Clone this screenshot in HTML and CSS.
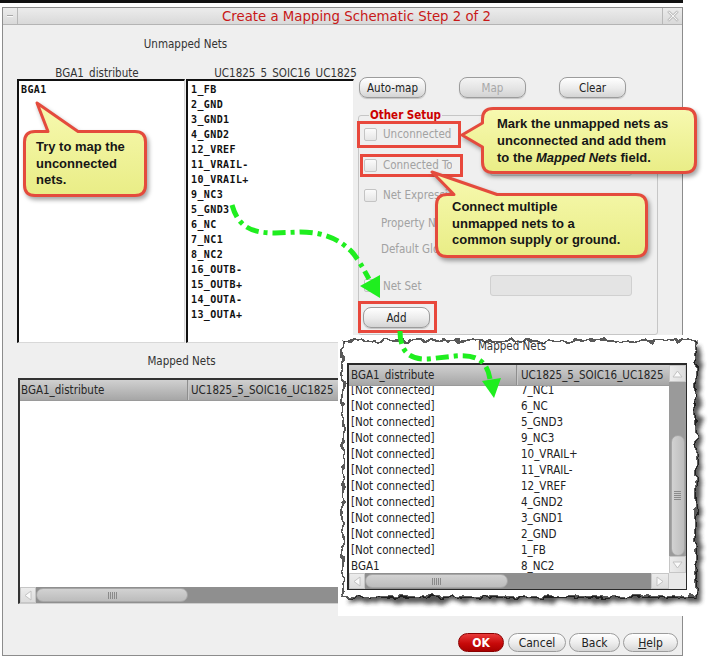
FILE: index.html
```html
<!DOCTYPE html>
<html>
<head>
<meta charset="utf-8">
<title>Create a Mapping Schematic Step 2 of 2</title>
<link rel="stylesheet" href="styles.css">
</head>
<body>
<div class="topstrip"></div>
<div class="window">
  <div class="titlebar">
    <div class="tb-btn tb-min"><span class="minbar"></span></div>
    <div class="title">Create a Mapping Schematic Step 2 of 2</div>
    <div class="tb-btn tb-close">
      <svg width="12" height="12" viewBox="0 0 12 12"><path d="M2,2 L10,10 M10,2 L2,10" stroke="#c4c4c4" stroke-width="3" stroke-linecap="round"/><path d="M2,2 L10,10 M10,2 L2,10" stroke="#f4f4f4" stroke-width="1" stroke-linecap="round"/></svg>
    </div>
  </div>
  <div class="content">
    <div class="top">
      <div class="unmapped">
        <div class="sec-label">Unmapped Nets</div>
        <div class="lists">
          <div class="listcol">
            <div class="colhead colhead-l">BGA1_distribute</div>
            <div class="listbox listbox-l">
              <div class="item">BGA1</div>
            </div>
          </div>
          <div class="listcol">
            <div class="colhead colhead-r">UC1825_5_SOIC16_UC1825</div>
            <div class="listbox listbox-r">
              <div class="item">1_FB</div>
              <div class="item">2_GND</div>
              <div class="item">3_GND1</div>
              <div class="item">4_GND2</div>
              <div class="item">12_VREF</div>
              <div class="item">11_VRAIL-</div>
              <div class="item">10_VRAIL+</div>
              <div class="item">9_NC3</div>
              <div class="item">5_GND3</div>
              <div class="item">6_NC</div>
              <div class="item">7_NC1</div>
              <div class="item">8_NC2</div>
              <div class="item">16_OUTB-</div>
              <div class="item">15_OUTB+</div>
              <div class="item">14_OUTA-</div>
              <div class="item">13_OUTA+</div>
            </div>
          </div>
        </div>
      </div>
      <div class="rightpanel">
        <div class="btnrow">
          <div class="btn">Auto-map</div>
          <div class="btn btn-disabled">Map</div>
          <div class="btn">Clear</div>
        </div>
        <fieldset class="group">
          <legend class="legend">Other Setup</legend>
          <div class="crow r1"><span class="cb"></span><span class="lbl">Unconnected</span></div>
          <div class="crow r2"><span class="cb"></span><span class="lbl lbl-ct">Connected To</span><span class="field field-ct"></span></div>
          <div class="crow r3"><span class="cb"></span><span class="lbl">Net Expression</span></div>
          <div class="crow r4"><span class="lbl lbl-plain">Property Name</span></div>
          <div class="crow r5"><span class="lbl lbl-plain">Default Global</span></div>
          <div class="crow r6"><span class="cb"></span><span class="lbl lbl-ns">Net Set</span><span class="field"></span></div>
          <div class="btn btn-add">Add</div>
        </fieldset>
      </div>
    </div>
    <div class="bottom">
      <div class="sec-label mapped-label">Mapped Nets</div>
      <div class="mtable">
        <div class="thead">
          <div class="hc1">BGA1_distribute</div>
          <div class="hc2">UC1825_5_SOIC16_UC1825</div>
        </div>
        <div class="mbody"></div>
        <div class="hscroll">
          <div class="sarrow">
            <svg width="8" height="11" viewBox="0 0 8 11"><path d="M7,1 L1,5.5 L7,10 Z" fill="#fafafa" stroke="#c2c2c2"/></svg>
          </div>
          <div class="hthumb hthumb-m"><span class="grip-v"></span></div>
          <div class="htrack"></div>
        </div>
      </div>
    </div>
    <div class="dlg-btns">
      <div class="dbtn dbtn-ok">OK</div>
      <div class="dbtn dbtn-cancel">Cancel</div>
      <div class="dbtn dbtn-back">Back</div>
      <div class="dbtn dbtn-help"><u>H</u>elp</div>
    </div>
  </div>
</div>

<div class="inset">
  <svg class="torn" width="371" height="281" viewBox="0 0 371 281">
    <defs>
      <filter id="rough" x="-5%" y="-5%" width="110%" height="110%" color-interpolation-filters="sRGB">
        <feTurbulence type="fractalNoise" baseFrequency="0.11" numOctaves="2" seed="7" result="n"/>
        <feDisplacementMap in="SourceGraphic" in2="n" scale="9" xChannelSelector="R" yChannelSelector="G"/>
      </filter>
      <filter id="shadowf" x="-10%" y="-10%" width="120%" height="120%">
        <feGaussianBlur stdDeviation="2.2"/>
      </filter>
    </defs>
    <g filter="url(#shadowf)" opacity="0.8">
      <rect x="10" y="11" width="353" height="256" fill="#2e2e2e" filter="url(#rough)"/>
    </g>
    <rect x="5" y="6" width="353" height="256" fill="#fff" stroke="#000" stroke-width="1.3" filter="url(#rough)"/>
  </svg>
  <div class="inset-inner">
    <div class="inset-label">Mapped Nets</div>
    <div class="itable">
      <div class="imain">
        <div class="thead thead-i">
          <div class="hc1 hc1-i">BGA1_distribute</div>
          <div class="hc2 hc2-i">UC1825_5_SOIC16_UC1825</div>
        </div>
        <div class="ibody">
          <div class="rows">
            <div class="row"><span class="rc1">[Not connected]</span><span class="rc2">7_NC1</span></div>
            <div class="row"><span class="rc1">[Not connected]</span><span class="rc2">6_NC</span></div>
            <div class="row"><span class="rc1">[Not connected]</span><span class="rc2">5_GND3</span></div>
            <div class="row"><span class="rc1">[Not connected]</span><span class="rc2">9_NC3</span></div>
            <div class="row"><span class="rc1">[Not connected]</span><span class="rc2">10_VRAIL+</span></div>
            <div class="row"><span class="rc1">[Not connected]</span><span class="rc2">11_VRAIL-</span></div>
            <div class="row"><span class="rc1">[Not connected]</span><span class="rc2">12_VREF</span></div>
            <div class="row"><span class="rc1">[Not connected]</span><span class="rc2">4_GND2</span></div>
            <div class="row"><span class="rc1">[Not connected]</span><span class="rc2">3_GND1</span></div>
            <div class="row"><span class="rc1">[Not connected]</span><span class="rc2">2_GND</span></div>
            <div class="row"><span class="rc1">[Not connected]</span><span class="rc2">1_FB</span></div>
            <div class="row"><span class="rc1">BGA1</span><span class="rc2">8_NC2</span></div>
          </div>
        </div>
      </div>
      <div class="vscroll">
        <div class="varrow">
          <svg width="11" height="8" viewBox="0 0 11 8"><path d="M1,7 L5.5,1 L10,7 Z" fill="#fafafa" stroke="#c2c2c2"/></svg>
        </div>
        <div class="vtrack"><div class="vthumb"><span class="grip-h"></span></div></div>
        <div class="varrow varrow-down">
          <svg width="11" height="8" viewBox="0 0 11 8"><path d="M1,1 L5.5,7 L10,1 Z" fill="#fafafa" stroke="#c2c2c2"/></svg>
        </div>
      </div>
      <div class="hscroll hscroll-i">
        <div class="sarrow">
          <svg width="8" height="11" viewBox="0 0 8 11"><path d="M7,1 L1,5.5 L7,10 Z" fill="#fafafa" stroke="#c2c2c2"/></svg>
        </div>
        <div class="hthumb hthumb-i"><span class="grip-v"></span></div>
        <div class="htrack"></div>
        <div class="sarrow sarrow-r">
          <svg width="8" height="11" viewBox="0 0 8 11"><path d="M1,1 L7,5.5 L1,10 Z" fill="#fafafa" stroke="#c2c2c2"/></svg>
        </div>
      </div>
      <div class="corner"></div>
    </div>
  </div>
</div>

<div class="hl hl-1"></div>
<div class="hl hl-2"></div>
<div class="hl hl-3"></div>

<div class="callout co-1">
  <svg class="cshape" width="124" height="67" viewBox="0 0 124 67">
    <defs><linearGradient id="cg1" x1="0" y1="0" x2="0" y2="1"><stop offset="0" stop-color="#f7f9b0"/><stop offset="1" stop-color="#e9ed86"/></linearGradient></defs>
    <path d="M12,1.5 L25,1.5 L14,-27 L55,1.5 L112,1.5 Q122.5,1.5 122.5,12 L122.5,55 Q122.5,65.5 112,65.5 L12,65.5 Q1.5,65.5 1.5,55 L1.5,12 Q1.5,1.5 12,1.5 Z" fill="url(#cg1)" stroke="#e44b3d" stroke-width="3" stroke-linejoin="round"/>
  </svg>
  <div class="ctext ct-1">Try to map the<br>unconnected<br>nets.</div>
</div>

<div class="callout co-2">
  <svg class="cshape" width="216" height="67" viewBox="0 0 216 67">
    <defs><linearGradient id="cg2" x1="0" y1="0" x2="0" y2="1"><stop offset="0" stop-color="#f7f9b0"/><stop offset="1" stop-color="#e9ed86"/></linearGradient></defs>
    <path d="M12,1.5 L204,1.5 Q214.5,1.5 214.5,12 L214.5,55 Q214.5,65.5 204,65.5 L12,65.5 Q1.5,65.5 1.5,55 L1.5,40 L-19,28 L1.5,16 L1.5,12 Q1.5,1.5 12,1.5 Z" fill="url(#cg2)" stroke="#e44b3d" stroke-width="3" stroke-linejoin="round"/>
  </svg>
  <div class="ctext ct-2">Mark the unmapped nets as<br>unconnected and add them<br>to the <i>Mapped Nets</i> field.</div>
</div>

<div class="callout co-3">
  <svg class="cshape" width="213" height="65" viewBox="0 0 213 65">
    <defs><linearGradient id="cg3" x1="0" y1="0" x2="0" y2="1"><stop offset="0" stop-color="#f7f9b0"/><stop offset="1" stop-color="#e9ed86"/></linearGradient></defs>
    <path d="M12,1.5 L19,1.5 L-3,-21 L62,1.5 L201,1.5 Q211.5,1.5 211.5,12 L211.5,53 Q211.5,63.5 201,63.5 L12,63.5 Q1.5,63.5 1.5,53 L1.5,12 Q1.5,1.5 12,1.5 Z" fill="url(#cg3)" stroke="#e44b3d" stroke-width="3" stroke-linejoin="round"/>
  </svg>
  <div class="ctext ct-3">Connect multiple<br>unmapped nets to a<br>common supply or ground.</div>
</div>

<svg class="arrows" width="709" height="656" viewBox="0 0 709 656">
  <path d="M232,205 C238,226 250,233 275,233 L300,232 C325,232 340,240 352,252 C358,259 363,268 369,279" fill="none" stroke="#1fee1f" stroke-width="5" stroke-dasharray="13 5 4 5"/>
  <path d="M380,298 L380,275 L360,286 Z" fill="#1fee1f"/>
  <path d="M400,331 C400,350 408,360 428,359 L455,356 C475,354 487,360 490,379" fill="none" stroke="#1fee1f" stroke-width="5" stroke-dasharray="13 5 4 5"/>
  <path d="M494,398 L501,378 L482,381 Z" fill="#1fee1f"/>
</svg>
</body>
</html>
```

FILE: styles.css
```css
* { box-sizing: border-box; }
html, body { margin: 0; padding: 0; }
body {
  width: 709px;
  height: 656px;
  overflow: hidden;
  position: relative;
  background: #fff;
  font-family: "DejaVu Sans Condensed", "DejaVu Sans", sans-serif;
  font-stretch: condensed;
  font-size: 11.5px;
  color: #222;
}

.topstrip { height: 3px; width: 683px; background: #111; }

.window {
  margin: 4px 0 0 2px;
  width: 681px;
  height: 649px;
  border: 1px solid #8c8c8c;
  background: #efefef;
  display: flex;
  flex-direction: column;
}

.titlebar {
  height: 17px;
  flex: none;
  display: flex;
  border-bottom: 1px solid #b4b4b4;
  background: linear-gradient(#ececec, #d9d9d9);
}
.tb-btn {
  width: 15px;
  flex: none;
  border-right: 1px solid #b8b8b8;
  display: flex;
  align-items: center;
  justify-content: center;
}
.tb-close { width: 20px; border-right: none; border-left: 1px solid #b8b8b8; }
.minbar { width: 6px; height: 2px; background: #a8a8a8; border-bottom: 1px solid #f8f8f8; }
.title {
  flex: 1;
  text-align: center;
  padding-left: 33px;
  color: #c81818;
  font-size: 14.8px;
  line-height: 16px;
  white-space: nowrap;
}

.content { flex: 1; display: flex; flex-direction: column; }

.top { height: 318px; flex: none; display: flex; padding-left: 14px; }
.unmapped { width: 337px; flex: none; }
.sec-label { margin-top: 11px; height: 16px; line-height: 16px; text-align: center; color: #333; }
.lists { margin-top: 15px; display: flex; gap: 1px; }
.listcol { width: 168px; }
.colhead {
  height: 12px;
  line-height: 12px;
  overflow: hidden;
  text-align: center;
  white-space: nowrap;
  color: #333;
}
.colhead-l { padding-right: 8px; }
.colhead-r { padding-left: 25px; width: 174px; }
.listbox {
  height: 264px;
  background: #fff;
  border-top: 2px solid #111;
  border-left: 2px solid #111;
  border-right: 1px solid #d8d8d8;
  border-bottom: 1px solid #d8d8d8;
  padding-top: 1px;
  font-family: "DejaVu Sans Mono", monospace;
  font-stretch: normal;
  font-weight: bold;
  font-size: 10px;
  letter-spacing: 0.4px;
  color: #111;
}
.listbox-l { padding-left: 2px; }
.listbox-r { padding-left: 3px; border-right-color: #eee; }
.item { height: 15px; line-height: 15px; white-space: nowrap; }

.rightpanel { flex: 1; }
.btnrow { margin-top: 52px; padding-left: 5px; display: flex; gap: 33px; }
.btn {
  width: 67px;
  height: 21px;
  border: 1px solid #9c9c9c;
  border-radius: 8px;
  background: linear-gradient(#ffffff, #ebebeb 55%, #d4d4d4);
  box-shadow: 0 1px 1px rgba(0,0,0,0.18);
  display: flex;
  align-items: center;
  justify-content: center;
  color: #222;
}
.btn-disabled { color: #a8a8a8; background: linear-gradient(#f4f4f4, #e4e4e4 55%, #d2d2d2); }

.group {
  margin: 10px 0 0 4px;
  padding: 0 5px;
  width: 300px;
  height: 227px;
  min-width: 0;
  border: 1px solid #c6c6c6;
  border-radius: 3px;
}
.legend {
  padding: 0 1px;
  margin-left: 5px;
  height: 14px;
  line-height: 14px;
  color: #cc0000;
  font-weight: bold;
}
.crow { display: flex; align-items: center; height: 20px; }
.r1 { margin-top: 2px; }
.r2 { margin-top: 11px; }
.r3 { margin-top: 10px; }
.r4 { margin-top: 8px; }
.r5 { margin-top: 6px; }
.r6 { margin-top: 16px; height: 21px; }
.cb {
  width: 13px;
  height: 13px;
  flex: none;
  border: 1px solid #c4c4c4;
  border-radius: 2px;
  background: linear-gradient(#fbfbfb, #e6e6e6);
}
.lbl { margin-left: 6px; color: #a2a2a2; white-space: nowrap; }
.lbl-ct { width: 69px; overflow: hidden; flex: none; }
.lbl-plain { margin-left: 17px; }
.lbl-ns { width: 107px; flex: none; }
.field {
  width: 142px;
  height: 21px;
  flex: none;
  background: #e4e4e4;
  border: 1px solid #d0d0d0;
  border-radius: 3px;
}
.field-ct { margin-left: 38px; background: #ececec; }
.btn-add { margin-top: 11px; margin-left: -1px; }

.bottom { flex: none; }
.mapped-label { margin-top: 10px; width: 342px; padding-left: 15px; }
.mtable {
  margin: 9px 0 0 15px;
  width: 638px;
  height: 226px;
  background: #fff;
  border-top: 2px solid #333;
  border-left: 2px solid #333;
  border-right: 1px solid #ccc;
  border-bottom: 1px solid #ccc;
  display: flex;
  flex-direction: column;
}
.thead {
  height: 21px;
  flex: none;
  display: flex;
  background: linear-gradient(#d0d0d0, #a6a6a6);
  border-bottom: 1px solid #9a9a9a;
  color: #262626;
  white-space: nowrap;
}
.hc1 { width: 168px; flex: none; padding-left: 1px; line-height: 20px; border-right: 1px solid #8e8e8e; box-shadow: 1px 0 0 #c8c8c8; }
.hc2 { padding-left: 3px; line-height: 20px; }
.mbody { flex: 1; }
.hscroll { height: 16px; flex: none; display: flex; background: #8f8f8f; }
.sarrow {
  width: 16px;
  flex: none;
  background: linear-gradient(#ececec, #dcdcdc);
  border: 1px solid #c6c6c6;
  display: flex;
  align-items: center;
  justify-content: center;
}
.sarrow-r { width: 18px; }
.hthumb {
  flex: none;
  height: 14px;
  margin-top: 1px;
  border-radius: 7px;
  background: linear-gradient(#d2d2d2, #bcbcbc);
  border: 1px solid #a6a6a6;
  display: flex;
  align-items: center;
  justify-content: center;
}
.hthumb-m { width: 152px; }
.hthumb-i { width: 143px; }
.htrack { flex: 1; }
.grip-v {
  width: 9px;
  height: 7px;
  background: repeating-linear-gradient(90deg, #8a8a8a 0 1px, transparent 1px 2px);
}
.grip-h {
  width: 7px;
  height: 9px;
  background: repeating-linear-gradient(180deg, #8a8a8a 0 1px, transparent 1px 2px);
}

.dlg-btns { margin-top: 29px; padding-right: 4px; display: flex; justify-content: flex-end; gap: 3px; }
.dbtn {
  height: 19px;
  border: 1px solid #9c9c9c;
  border-radius: 10px;
  background: linear-gradient(#ffffff, #ececec 55%, #d6d6d6);
  display: flex;
  align-items: center;
  justify-content: center;
  color: #222;
  font-size: 12px;
}
.dbtn-ok {
  width: 46px;
  margin-right: 1px;
  background: linear-gradient(#e83a3a, #c80a0a 55%, #a80000);
  border-color: #8a0000;
  color: #fff;
  font-weight: bold;
}
.dbtn-cancel { width: 58px; }
.dbtn-back { width: 51px; }
.dbtn-help { width: 55px; }

/* inset (torn screenshot) */
.inset {
  position: absolute;
  left: 338px;
  top: 335px;
  width: 371px;
  height: 281px;
  background: #fff;
  z-index: 5;
}
.torn { position: absolute; left: 0; top: 0; }
.inset-inner { position: relative; padding: 4px 0 0 9px; }
.inset-label { width: 340px; padding-right: 10px; height: 14px; line-height: 14px; text-align: center; color: #333; }
.itable {
  margin-top: 10px;
  width: 340px;
  height: 227px;
  background: #fff;
  border: 1px solid #2a2a2a;
  border-top-width: 2px;
  border-left-width: 2px;
  display: grid;
  grid-template-columns: 1fr 17px;
  grid-template-rows: 1fr 16px;
}
.imain { display: flex; flex-direction: column; overflow: hidden; }
.hc1-i { padding-left: 2px; }
.hc2-i { padding-left: 4px; }
.ibody { flex: 1; overflow: hidden; }
.rows { margin-top: -4px; }
.row { display: flex; height: 16px; line-height: 16px; white-space: nowrap; color: #222; }
.rc1 { width: 168px; flex: none; padding-left: 2px; }
.rc2 { padding-left: 4px; }
.vscroll { display: flex; flex-direction: column; background: #9a9a9a; }
.varrow {
  height: 17px;
  flex: none;
  background: linear-gradient(90deg, #ececec, #dcdcdc);
  border: 1px solid #c6c6c6;
  display: flex;
  align-items: center;
  justify-content: center;
}
.vtrack { flex: 1; display: flex; justify-content: center; }
.vthumb {
  margin-top: 53px;
  width: 14px;
  height: 121px;
  border-radius: 7px;
  background: linear-gradient(90deg, #d2d2d2, #bdbdbd);
  border: 1px solid #a6a6a6;
  display: flex;
  align-items: center;
  justify-content: center;
}
.corner { background: #e8e8e8; }

/* annotations */
.hl { position: absolute; border: 3px solid #e8483c; z-index: 6; }
.hl-1 { left: 357px; top: 121px; width: 104px; height: 27px; }
.hl-2 { left: 360px; top: 154px; width: 103px; height: 23px; }
.hl-3 { left: 358px; top: 301px; width: 79px; height: 32px; }

.callout { position: absolute; z-index: 7; }
.cshape { position: absolute; left: 0; top: 0; overflow: visible; filter: drop-shadow(2px 3px 2px rgba(0,0,0,0.35)); }
.ctext {
  position: relative;
  font-family: "Liberation Sans", Arial, sans-serif;
  font-stretch: normal;
  font-weight: bold;
  font-size: 13px;
  color: #161616;
  white-space: nowrap;
}
.co-1 { left: 23px; top: 130px; width: 124px; height: 67px; }
.ct-1 { padding: 9px 0 0 13px; line-height: 16.5px; }
.co-2 { left: 481px; top: 107px; width: 216px; height: 67px; }
.ct-2 { padding: 7.5px 0 0 16px; line-height: 17px; }
.co-3 { left: 435px; top: 193px; width: 213px; height: 65px; }
.ct-3 { padding: 6px 0 0 17px; line-height: 16.5px; }

.arrows { position: absolute; left: 0; top: 0; z-index: 10; pointer-events: none; }
```
